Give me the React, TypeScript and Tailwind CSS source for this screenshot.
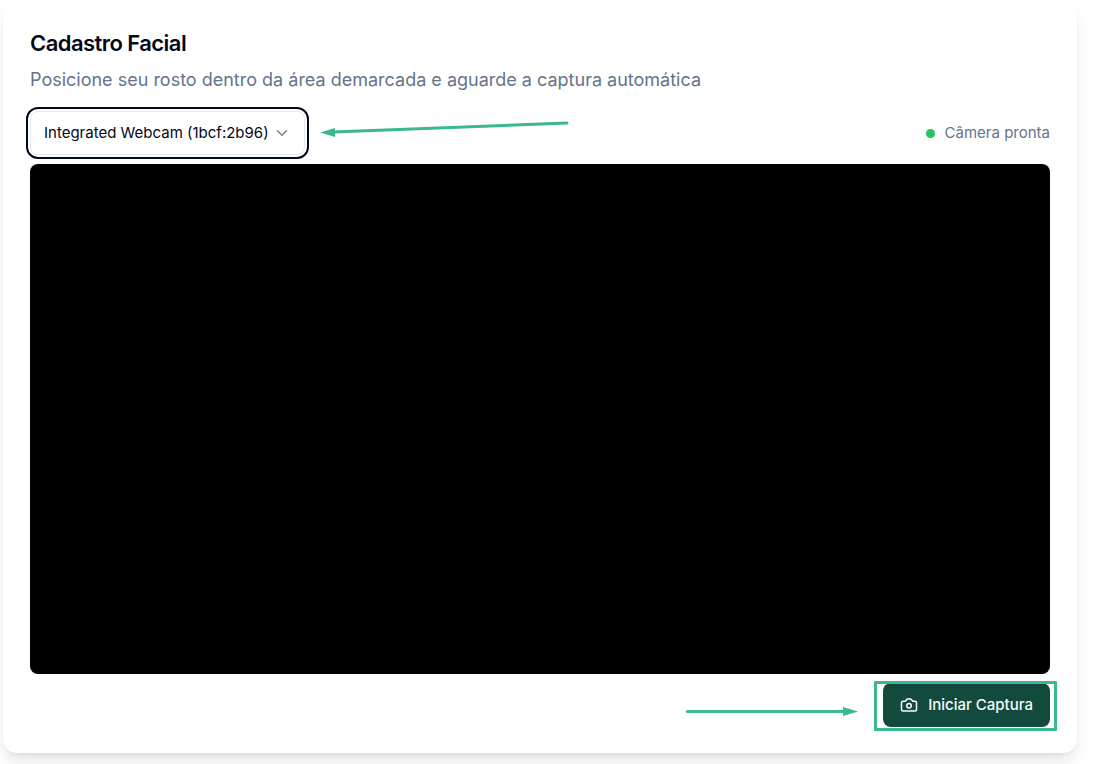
import { ChevronDown } from "lucide-react";

function CameraIcon() {
  return (
    <svg className="size-[18px] shrink-0" viewBox="0 0 24 24" fill="none" stroke="currentColor" strokeWidth="2" strokeLinecap="round" strokeLinejoin="round" aria-hidden="true">
      <path d="M14.5 4h-5L7 7H4a2 2 0 0 0-2 2v9a2 2 0 0 0 2 2h16a2 2 0 0 0 2-2V9a2 2 0 0 0-2-2h-3l-2.5-3z" />
      <circle cx="12" cy="13" r="3" />
    </svg>
  );
}

function CameraSelect() {
  return (
    <div className="relative">
      <select
        aria-label="Câmera"
        className="h-11 w-[275px] appearance-none rounded-lg border border-[#e2e8f0] bg-white pl-[13px] pr-8 text-[15px] text-[#020817] outline-2 outline-offset-2 outline-[#020817]"
      >
        <option>Integrated Webcam (1bcf:2b96)</option>
      </select>
      <ChevronDown className="pointer-events-none absolute right-3.5 top-[13px] size-[18px] text-[#020817] opacity-50" aria-hidden="true" />
      <svg className="pointer-events-none absolute left-full top-2 ml-3.5 h-5 w-[252px]" viewBox="0 0 252 20" aria-hidden="true">
        <path d="M14 13L248 4" stroke="#3db692" strokeWidth="3" strokeLinecap="round" />
        <path d="M1 13.5L16 9v9z" fill="#3db692" />
      </svg>
    </div>
  );
}

export default function App() {
  return (
    <main className="overflow-hidden bg-white pb-3 pl-[3px] pr-4 font-['Inter','Liberation_Sans',sans-serif]">
      <section className="rounded-[14px] bg-white px-[27px] pb-[26px] pt-8 shadow-[0_11px_17px_-3px_rgb(0_0_0/0.1),0_4px_7px_-4px_rgb(0_0_0/0.1)]">
        <h1 className="text-[22px] leading-[22px] font-semibold tracking-tight text-[#020817]">Cadastro Facial</h1>
        <p className="mt-3 text-lg leading-7 text-[#64748b]">
          Posicione seu rosto dentro da área demarcada e aguarde a captura automática
        </p>
        <div className="mt-[17px] flex items-center justify-between">
          <CameraSelect />
          <div className="flex items-center gap-2.5 text-[15px] text-[#64748b]" role="status">
            <span className="size-[9px] rounded-full bg-[#22c55e]" />
            <span>Câmera pronta</span>
          </div>
        </div>
        <div className="mt-[9px] aspect-[2/1] rounded-lg bg-black" />
        <div className="mt-[9px] flex justify-end">
          <div className="relative">
            <button className="flex h-11 items-center gap-2.5 rounded-lg bg-[#134a3e] px-[17px] text-[15px] font-medium text-[#f8fafc]">
              <CameraIcon />
              Iniciar Captura
            </button>
            <div className="pointer-events-none absolute -bottom-1 -left-[9px] -right-[7px] -top-0.5 rounded-[1px] border-3 border-[#3db692]" />
            <svg className="pointer-events-none absolute right-full top-[18px] mr-6 h-5 w-[174px]" viewBox="0 0 174 20" aria-hidden="true">
              <path d="M2.5 10.5H160" stroke="#3db692" strokeWidth="3" strokeLinecap="round" />
              <path d="M173 10.5L158 6v9z" fill="#3db692" />
            </svg>
          </div>
        </div>
      </section>
    </main>
  );
}
